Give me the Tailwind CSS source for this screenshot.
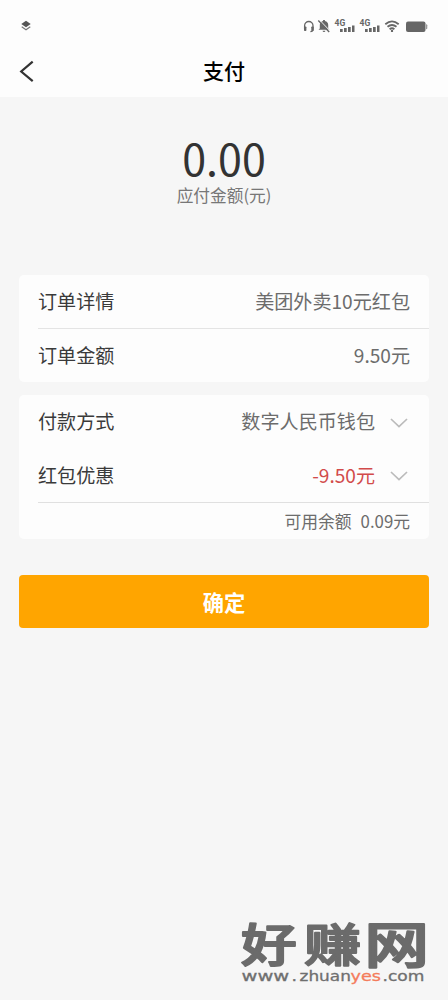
<!DOCTYPE html>
<html lang="zh-CN">
<head>
<meta charset="utf-8">
<title>支付</title>
<script src="https://cdn.jsdelivr.net/npm/@tailwindcss/browser@4"></script>
</head>
<body class="bg-[#f6f6f6] font-['Noto_Sans_CJK_SC',sans-serif]">
<div class="relative flex h-[1000px] w-[448px] flex-col overflow-hidden bg-[#f6f6f6] text-[19.100px] text-[#3a3a3a]">
  <header class="h-[97px] shrink-0 bg-[#fdfdfd]">
    <div class="flex h-[46px] items-center justify-between pt-[6px] pr-[18px] pl-[20px]">
      <svg class="h-[12px] w-[12px]" viewBox="0 0 12 12"><path d="M6 .8 10.700 4 6 7.300 1.300 4Z" fill="#555"/><path d="m1.700 6.800 4.300 3 4.300-3" fill="none" stroke="#777" stroke-width="1.200"/></svg>
      <svg class="h-[20px] w-[130px]" viewBox="300 16 130 20" fill="#666">
        <path d="M304.600 29v-3.300a4.200 4.200 0 0 1 8.400 0V29q0 2.600-2.600 2.700" fill="none" stroke="#666" stroke-width="1.300"/>
        <rect x="304" y="26.500" width="2.400" height="4.500" rx=".8"/><rect x="311.300" y="26.500" width="2.400" height="4.500" rx=".8"/>
        <path d="M319.800 28.500V25a4.200 4.200 0 0 1 3.300-4.100V20h1.800v.9a4.200 4.200 0 0 1 3.300 4.100v3.500l1.300 1.300H318.500ZM322.600 30.700h2.800a1.400 1.400 0 0 1-2.800 0Z"/>
        <path d="m319.200 19.700 11 11.300" stroke="#fdfdfd" stroke-width="1"/><path d="m318.300 20.500 10.900 11.400" stroke="#666" stroke-width="1.400"/>
        <g font-family="Roboto, sans-serif" font-size="8.500" font-weight="700"><text x="334.500" y="26">4G</text><text x="359.500" y="26">4G</text></g>
        <path d="M340 29h2.700V32H340ZM344 28h2.700V32H344ZM348 27h2.700V32H348ZM352 25.500h2.500V32H352ZM365 29h2.700V32H365ZM369 28h2.700V32H369ZM373 27h2.700V32H373ZM377 25.500h2.500V32H377Z"/>
        <g fill="none" stroke="#666" stroke-width="1.800"><path d="M385.300 24.200q6.700-5.600 13.400 0M387.500 26.800q4.500-3.600 9 0M389.600 29.200q2.400-1.900 4.800 0"/></g><circle cx="392" cy="30.900" r="1.200"/>
        <rect x="406" y="21.500" width="19.500" height="10.500" rx="2"/><path d="M426 24.300q1.300 0 1.300 1v3q0 1-1.300 1Z" fill="#999"/>
      </svg>
    </div>
    <div class="grid h-[51px] grid-cols-3 items-center">
      <svg class="ml-[18px] h-[24px] w-[18px]" viewBox="0 0 18 24"><path d="M14.700 1.600 3.200 11.500l11.500 9.700" fill="none" stroke="#333" stroke-width="2.200"/></svg>
      <h1 class="pb-[3px] text-center text-[21px] leading-[48px] font-medium text-black">支付</h1>
    </div>
  </header>
  <section class="flex h-[178px] shrink-0 flex-col items-center pt-[36px]">
    <p class="text-[43px] leading-[48px] text-[#333]">0.00</p>
    <p class="mt-[2px] text-[16.700px] leading-[24px] text-[#777]">应付金额(元)</p>
  </section>
  <section class="mx-[19px] h-[107px] shrink-0 rounded-[5px] bg-[#fdfdfd]">
    <div class="ml-[19px] flex h-[53.500px] items-center justify-between border-b border-[#e4e4e4] pr-[19px]"><span>订单详情</span><span class="text-[#6c6c6c]">美团外卖10元红包</span></div>
    <div class="ml-[19px] flex h-[53px] items-center justify-between pr-[19px]"><span>订单金额</span><span class="text-[#6c6c6c]">9.50元</span></div>
  </section>
  <section class="mx-[19px] mt-[13px] h-[144px] shrink-0 rounded-[5px] bg-[#fdfdfd]">
    <div class="ml-[19px] flex h-[53px] items-center pr-[21px]"><span>付款方式</span><span class="ml-auto text-[#6c6c6c]">数字人民币钱包</span>
      <svg class="mt-[2px] ml-[15px] h-[12px] w-[18px]" viewBox="0 0 18 12"><path d="m1 2 8 7.500L17 2" fill="none" stroke="#bbb" stroke-width="1.700"/></svg></div>
    <div class="ml-[19px] flex h-[55px] items-center border-b border-[#e0e0e0] pr-[21px]"><span>红包优惠</span><span class="ml-auto text-[#d24b4b]">-9.50元</span>
      <svg class="mt-[2px] ml-[15px] h-[12px] w-[18px]" viewBox="0 0 18 12"><path d="m1 2 8 7.500L17 2" fill="none" stroke="#bbb" stroke-width="1.700"/></svg></div>
    <div class="flex h-[36px] items-center justify-end gap-[9px] pt-[2px] pr-[19px] text-[16.800px] text-[#6c6c6c]"><span>可用余额</span><span>0.09元</span></div>
  </section>
  <button class="mx-[19px] mt-[36px] h-[53px] shrink-0 rounded-[4px] bg-[#ffa500] text-[21.300px] font-bold text-white">确定</button>
  <svg class="absolute top-[890px] left-[236px] h-[104px] w-[200px]" viewBox="236 890 200 104">
    <g font-family="Noto Sans CJK SC, sans-serif" font-weight="500" font-size="45" fill="#6b6b6b" stroke="#6b6b6b" stroke-width="1.900" stroke-linejoin="round">
      <text transform="translate(241 962) scale(1.240 1)">好</text>
      <text transform="translate(304 962) scale(1.270 1)">赚</text>
      <text transform="translate(364.500 963) scale(1.430 1.080)">网</text>
    </g>
    <g font-family="DejaVu Sans, sans-serif" font-size="14" fill="#6f6f6f" stroke="#6f6f6f" stroke-width=".3">
      <text transform="translate(241.500 981) scale(1.390 1)">www</text>
      <text transform="translate(291.500 981) scale(1.240 1)">.</text>
      <text transform="translate(299.500 981) scale(1.210 1)">zhuan</text>
      <text transform="translate(350.500 981) scale(1.260 1)" fill="#f47c5c" stroke="#f47c5c">yes</text>
      <text transform="translate(382.500 981) scale(1.220 1)">.com</text>
    </g>
  </svg>
</div>
</body>
</html>
